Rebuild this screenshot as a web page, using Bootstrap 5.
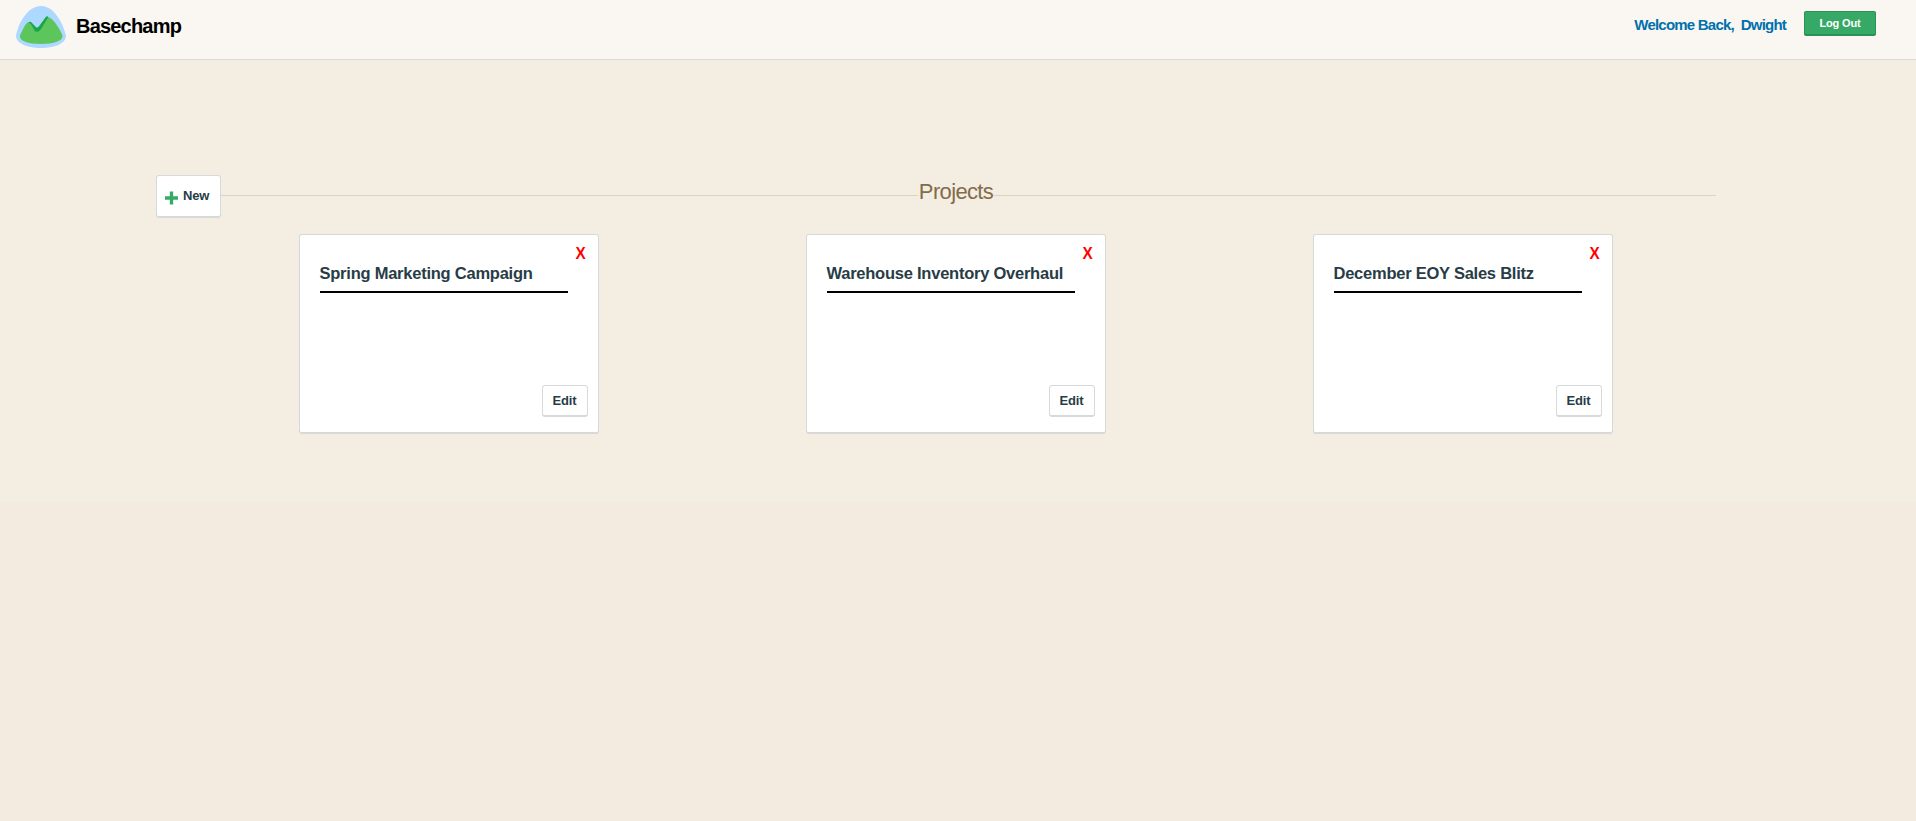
<!DOCTYPE html>
<html lang="en">
<head>
<meta charset="utf-8">
<meta name="viewport" content="width=device-width, initial-scale=1">
<title>Basechamp</title>
<link rel="stylesheet" href="https://cdn.jsdelivr.net/npm/bootstrap@5.3.0/dist/css/bootstrap.min.css">
<style>
body{font-family:"Liberation Sans",Arial,sans-serif;color:#283c46;background:linear-gradient(#f4ede1 503px,#f3eae0 503px);min-height:821px;-webkit-font-smoothing:antialiased}
.topbar{height:60px;background:#faf7f2;border-bottom:1px solid #dbd9d7;padding:0 40px 0 16px}
.brand-name{font-size:20px;line-height:24px;letter-spacing:-.8px;color:#000;margin:14px 0 0 10px}
.welcome{font-size:15px;line-height:20px;letter-spacing:-.78px;color:#0071ad;margin:15px 18px 0 0;white-space:pre}
.btn-logout{width:72px;height:25px;padding:1px 0 0;font-size:11px;letter-spacing:-.15px;line-height:21px;font-weight:700;color:#fff;background:#37a967;border:1px solid #2b9156;border-bottom-width:2px;border-radius:2px;margin-top:11px}
.projects{width:1560px;margin:115px 0 0 156px}
.btn-tile{background:#fff;border:1px solid #d8d9da;border-bottom-width:2px;border-radius:3px;color:#283c46;font-weight:700;font-size:13px;letter-spacing:-.2px;line-height:16px;padding:0}
.btn-new{width:65px;height:43px;padding:0 0 0 8px}
.btn-new svg{margin:4px 5px 0 0}
.rule{height:1px;background:#d9d3c8;margin-top:20px}
.rule-left{width:697px}
.heading{font-size:22px;line-height:24px;font-weight:400;color:#836c4b;width:76px;letter-spacing:-.65px;margin:5px 0 0;text-align:center}
.tiles{width:1521px;margin:16px 0 0 39px}
.tile{width:300px;height:200px;background:#fff;border:1px solid #d8d8d9;border-bottom-width:2px;border-radius:3px;padding:0 10px 15px 20px}
.remove{color:#f00;font-size:17px;line-height:18px;margin:10px 1px 0 0;background:none;border:0;padding:0}
.remove span{display:inline-block;transform:scaleX(.9)}
.tile h2{width:248px;height:30px;border-bottom:2px solid #000;font-size:16.5px;line-height:20px;letter-spacing:-.24px;font-weight:700;margin:0;white-space:nowrap}
.btn-edit{width:46px;height:32px}
</style>
</head>
<body>
<header class="topbar d-flex justify-content-between align-items-start">
  <a class="d-flex align-items-start text-decoration-none" href="#">
    <svg width="50" height="42" viewBox="0 0 50 42" style="margin-top:6px" aria-hidden="true">
      <path fill="#add8ff" d="M25 0C38 0 47 17 50 30c0 7-11 12-25 12S0 37 0 30C2 17 12 0 25 0Z"/>
      <path fill="#5cc55b" d="M4 29.500C7 23 10 16 13 16c3 0 4 9 8 9 3 0 8-14 10.500-14C36 11 43 21 46.500 29.500 47 35 38 38 25 38 12 38 3 35 4 29.500Z"/>
      <path fill="#18a648" d="M12.500 16.300Q14.500 15 16 17l4 4.200q1.500 1 3-1l7-9.400q1.200-1.200 2.300.2l-6 10q-3 5.300-6 4.800c-3-.6-4-8.300-7.800-9.500Z"/>
    </svg>
    <strong class="brand-name">Basechamp</strong>
  </a>
  <div class="d-flex align-items-start">
    <strong class="welcome">Welcome Back,  Dwight</strong>
    <button class="btn btn-logout">Log Out</button>
  </div>
</header>
<main class="projects">
  <div class="d-flex align-items-start">
    <button class="btn btn-tile btn-new d-flex align-items-center">
      <svg width="13" height="14" viewBox="0 0 14 14" aria-hidden="true"><path fill="#37a967" d="M5.200 0h3.600v5.200H14v3.600H8.800V14H5.200V8.800H0V5.200h5.200Z"/></svg>New
    </button>
    <div class="rule rule-left"></div>
    <h1 class="heading">Projects</h1>
    <div class="rule flex-grow-1"></div>
  </div>
  <div class="tiles row g-0">
    <div class="col-4 d-flex justify-content-center"><article class="tile d-flex flex-column">
      <button class="remove fw-bold align-self-end"><span>X</span></button><h2>Spring Marketing Campaign</h2>
      <button class="btn btn-tile btn-edit align-self-end mt-auto">Edit</button></article></div>
    <div class="col-4 d-flex justify-content-center"><article class="tile d-flex flex-column">
      <button class="remove fw-bold align-self-end"><span>X</span></button><h2>Warehouse Inventory Overhaul</h2>
      <button class="btn btn-tile btn-edit align-self-end mt-auto">Edit</button></article></div>
    <div class="col-4 d-flex justify-content-center"><article class="tile d-flex flex-column">
      <button class="remove fw-bold align-self-end"><span>X</span></button><h2>December EOY Sales Blitz</h2>
      <button class="btn btn-tile btn-edit align-self-end mt-auto">Edit</button></article></div>
  </div>
</main>
<script src="https://cdn.jsdelivr.net/npm/bootstrap@5.3.0/dist/js/bootstrap.bundle.min.js"></script>
</body>
</html>
